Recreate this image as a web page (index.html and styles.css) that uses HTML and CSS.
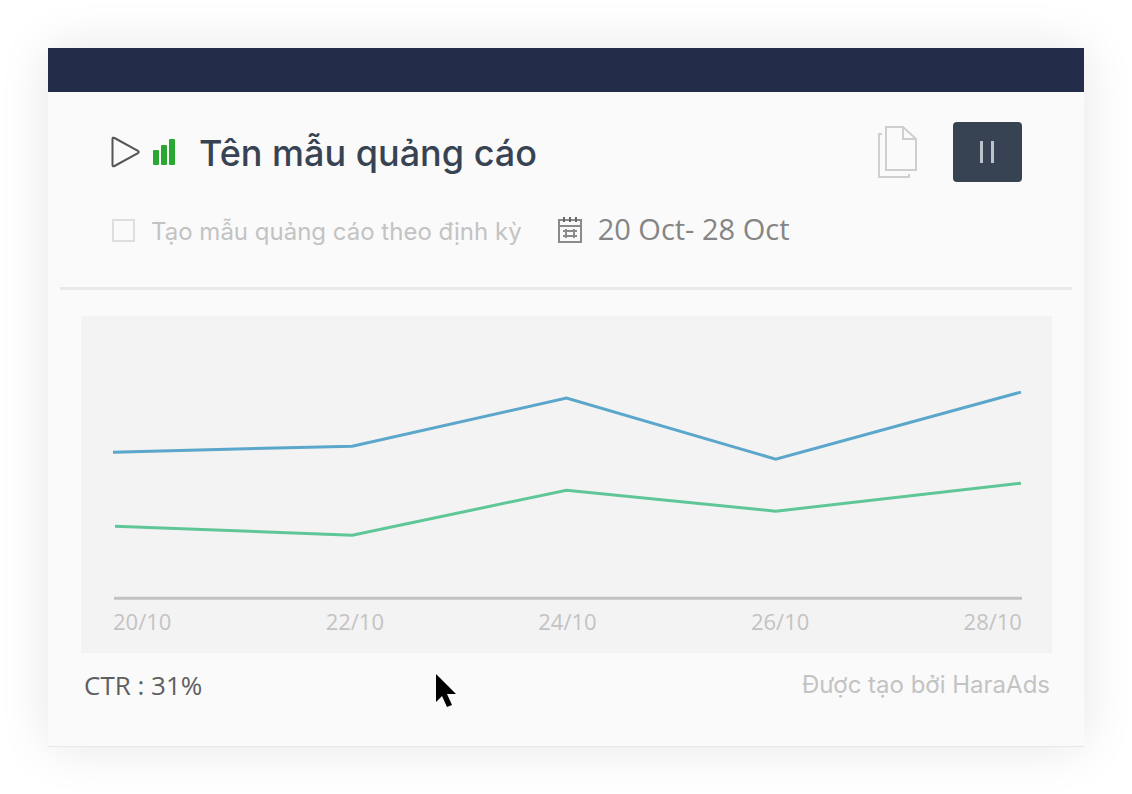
FILE: index.html
```
<!DOCTYPE html>
<html lang="vi">
<head>
  <meta charset="UTF-8" />
  <meta name="viewport" content="width=device-width, initial-scale=1.0"/>
  <title>HaraAds</title>
  <link rel="stylesheet" href="styles.css">
</head>
<body>
  <div class="card">
    <div class="topbar"></div>

    <header class="head">
      <div class="title-row">
        <svg class="play" viewBox="0 0 30 32" aria-hidden="true">
          <path d="M1.5 3 Q1.5 1 3.5 2 L26.5 14.6 Q29 16 26.5 17.4 L3.5 30 Q1.5 31 1.5 29 Z"/>
        </svg>
        <svg class="signal" viewBox="0 0 24 26" aria-hidden="true">
          <rect x="1" y="11" width="6" height="15" rx="1"/>
          <rect x="9" y="6" width="6" height="20" rx="1"/>
          <rect x="17" y="0" width="6" height="26" rx="1"/>
        </svg>
        <h1>Tên mẫu quảng cáo</h1>
        <button class="copy-btn" type="button" aria-label="Sao chép">
          <svg viewBox="0 0 42 54" aria-hidden="true">
            <path d="M9 2 H26 L39 14 V45 H9 Z M26 2 V14 H39"/>
            <path d="M5 9 H2 V52 H32 V49"/>
          </svg>
        </button>
        <button class="pause-btn" type="button" aria-label="Tạm dừng">
          <svg viewBox="0 0 16 22" aria-hidden="true">
            <rect x="0" y="0" width="3" height="22"/>
            <rect x="11" y="0" width="3" height="22"/>
          </svg>
        </button>
      </div>

      <div class="schedule-row">
        <input type="checkbox" id="repeat">
        <label for="repeat">Tạo mẫu quảng cáo theo định kỳ</label>
        <svg class="calendar" viewBox="0 0 24 26" aria-hidden="true">
          <path d="M1 3 H23 V25 H1 Z M1 9 H23"/>
          <path class="rings" d="M6 0 V5 M12 0 V5 M18 0 V5"/>
          <path d="M5 14 H19 M5 19 H19 M8 12 V21 M16 12 V21"/>
        </svg>
        <span class="date">20 Oct- 28 Oct</span>
      </div>
    </header>

    <section class="chart">
      <svg viewBox="0 0 908 284" role="img" aria-label="CTR 20/10 - 28/10">
        <polyline class="line-blue" points="0,136 239,130 453,82 662,143 907,76"/>
        <polyline class="line-green" points="2,210 239,219 453,174 662,195 907,167"/>
        <path class="axis" d="M1 282 H908"/>
      </svg>
      <div class="days">
        <span>20/10</span>
        <span>22/10</span>
        <span>24/10</span>
        <span>26/10</span>
        <span>28/10</span>
      </div>
    </section>

    <footer class="foot">
      <span class="ctr">CTR : 31%</span>
      <span class="by">Được tạo bởi HaraAds</span>
    </footer>

    <svg class="cursor" viewBox="0 0 22 34" aria-hidden="true">
      <path d="M1 0 V28 L7 22 L12 33 L17 31 L12 20 H21 Z"/>
    </svg>
  </div>
</body>
</html>
```
FILE: styles.css
```
:root {
  --navy: #232d4a;
  --slate: #374352;
  --muted: #c3c3c3;
  --card: #fafafa;
  --panel: #f3f3f3;
}

* {
  box-sizing: border-box;
  margin: 0;
  padding: 0;
}

body {
  font-family: Inter, sans-serif;
  background: #fff;
  padding: 48px;
}

.card {
  position: relative;
  background: var(--card);
  border-bottom: 1px solid #e8e8e8;
  box-shadow: 0 0 48px rgba(0, 0, 0, 0.1);
}

.topbar {
  height: 44px;
  background: var(--navy);
}

.head {
  margin: 0 12px;
  padding: 30px 50px 39px 51px;
  border-bottom: 3px solid #e9e9e9;
}

.title-row,
.schedule-row {
  display: flex;
  align-items: center;
}

.title-row {
  height: 60px;
}

.play {
  width: 30px;
  height: 32px;
  margin-right: 11px;
  fill: none;
  stroke: #555;
  stroke-width: 2;
}

.signal {
  width: 24px;
  height: 26px;
  margin-right: 23px;
  fill: #28a831;
}

h1 {
  flex: 1;
  padding-top: 2px;
  font-size: 36px;
  font-weight: 500;
  color: var(--slate);
  white-space: nowrap;
}

button {
  border: none;
  background: none;
  cursor: pointer;
}

.copy-btn {
  width: 42px;
  height: 54px;
  margin-right: 34px;
}

.copy-btn svg {
  display: block;
  width: 42px;
  height: 54px;
  fill: none;
  stroke: #cfcfcf;
  stroke-width: 2;
}

.pause-btn {
  display: flex;
  align-items: center;
  justify-content: center;
  width: 69px;
  height: 60px;
  border-radius: 4px;
  background: var(--slate);
}

.pause-btn svg {
  width: 16px;
  height: 22px;
  fill: #b9c3c9;
}

.schedule-row {
  height: 36px;
  margin-top: 30px;
}

.schedule-row input {
  appearance: none;
  width: 23px;
  height: 23px;
  margin: 0 16px 0 1px;
  border: 2px solid #dedede;
}

.schedule-row label {
  font-size: 24px;
  line-height: 32px;
  padding-top: 4px;
  color: var(--muted);
}

.calendar {
  width: 24px;
  height: 26px;
  margin: 0 16px 0 36px;
  fill: none;
  stroke: #8a8a8a;
  stroke-width: 2;
}

.calendar .rings {
  stroke: #666;
}

.date {
  font-family: "Open Sans", sans-serif;
  font-size: 29px;
  line-height: 36px;
  padding-bottom: 2px;
  color: #858585;
}

.chart {
  margin: 26px 32px 0 33px;
  padding: 0 30px 16px 32px;
  background: var(--panel);
}

.chart svg {
  display: block;
  width: 100%;
  fill: none;
  stroke-width: 3;
}

.line-blue {
  stroke: #5ba6cb;
}

.line-green {
  stroke: #5fc797;
}

.axis {
  stroke: #c2c2c2;
}

.days {
  display: flex;
  justify-content: space-between;
  padding-top: 5px;
  font-family: "Open Sans", sans-serif;
  font-size: 22px;
  line-height: 32px;
  color: var(--muted);
}

.foot {
  display: flex;
  justify-content: space-between;
  padding: 12px 34px 41px 36px;
  line-height: 40px;
}

.ctr {
  font-family: "Open Sans", sans-serif;
  font-size: 26px;
  color: #5f5f5f;
}

.by {
  font-size: 24px;
  color: var(--muted);
}

.cursor {
  position: absolute;
  left: 387px;
  bottom: 38px;
  width: 22px;
  height: 34px;
}
```
